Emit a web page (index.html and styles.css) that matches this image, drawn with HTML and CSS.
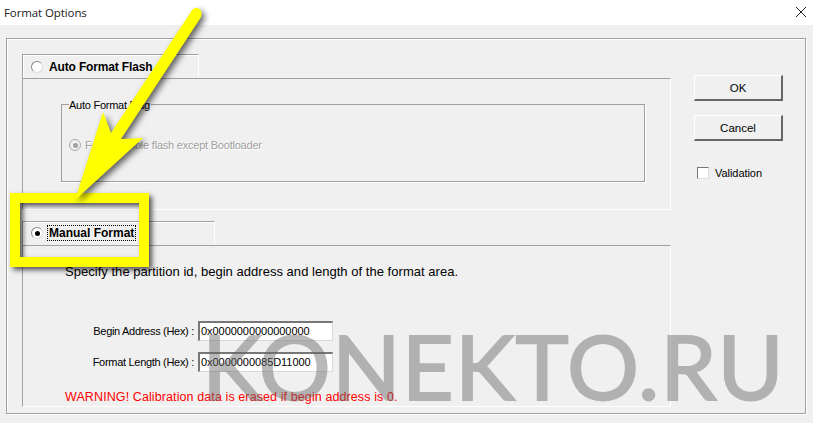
FILE: index.html
```html
<!DOCTYPE html>
<html lang="en">
<head>
<meta charset="utf-8">
<title>Format Options</title>
<link rel="stylesheet" href="styles.css">
</head>
<body>
<div class="window">
  <header class="titlebar">
    <span class="title">Format Options</span>
    <svg class="close" width="12" height="12" viewBox="0 0 12 12"><path d="M1 1l10 10M11 1L1 11" stroke="#222" stroke-width="1" fill="none"/></svg>
  </header>
  <div class="outer">
    <div class="main">
      <div class="tab tab-first">
        <span class="radio"></span>
        <span class="tab-label">Auto Format Flash</span>
      </div>
      <section class="panel panel-first">
        <div class="group">
          <span class="legend">Auto Format Flag</span>
          <div class="option">
            <span class="radio radio-off"></span>
            <span class="muted">Format whole flash except Bootloader</span>
          </div>
        </div>
      </section>
      <div class="tab tab-second">
        <span class="radio radio-on"></span>
        <span class="tab-label focus">Manual Format</span>
      </div>
      <section class="panel panel-second">
        <p class="hint">Specify the partition id, begin address and length of the format area.</p>
        <div class="row row-first">
          <label class="field-label">Begin Address (Hex) :</label>
          <div class="input">0x0000000000000000</div>
        </div>
        <div class="row">
          <label class="field-label">Format Length (Hex) :</label>
          <div class="input">0x0000000085D11000</div>
        </div>
        <p class="warning">WARNING! Calibration data is erased if begin address is 0.</p>
      </section>
    </div>
    <aside class="side">
      <button class="btn btn-ok">OK</button>
      <button class="btn">Cancel</button>
      <div class="check"><span class="box"></span><span>Validation</span></div>
    </aside>
  </div>
  <div class="watermark">KONEKTO.RU</div>
  <div class="highlight"></div>
  <svg class="arrow" width="813" height="423" viewBox="0 0 813 423">
    <path d="M192.500 9.500 Q197 6 200.500 10 Q202.500 14 200.500 18 L121 139 L143 138 L75 200 L103 112 L111 133 Z" fill="#ffff00"/>
  </svg>
</div>
</body>
</html>
```
FILE: styles.css
```css
* { box-sizing: border-box; }
html, body { margin: 0; padding: 0; }
body { font-family: "Liberation Sans", Arial, sans-serif; font-size: 11px; color: #000; }
.window { position: relative; width: 813px; height: 423px; background: #f0f0f0; overflow: hidden; }
.titlebar { height: 25px; background: #fff; display: flex; align-items: center; justify-content: space-between; padding: 0 1px 1px 4px; }
.title { font-family: "Open Sans", sans-serif; font-size: 11.500px; letter-spacing: -.1px; color: #222; }
.close { margin-right: 5px; }
.outer { display: flex; width: 800px; height: 376px; margin: 13px 0 0 6px; padding: 15px 0 0 15px; border: 1px solid #a0a0a0; box-shadow: 1px 1px 0 #fff, inset 1px 1px 0 #fff; }
.main { width: 649px; }
.tab { display: flex; align-items: center; height: 24px; padding: 1px 0 0 8px; border: 1px solid #a0a0a0; border-right-color: #fff; border-bottom: 0; box-shadow: inset 1px 1px 0 #fff; }
.tab-first { width: 177px; }
.tab-second { width: 193px; margin-top: 11px; padding: 0 0 1px 8px; }
.tab-label { margin-left: 5px; font-weight: 700; font-size: 12px; padding: 0 1px; }
.tab-first .tab-label { letter-spacing: -.15px; }
.focus { outline: 1px dotted #000; line-height: 14px; }
.radio { position: relative; width: 12px; height: 12px; border-radius: 50%; background: #fff; border: 1px solid #8a8a8a; border-right-color: #ddd; border-bottom-color: #ddd; flex: none; }
.radio-on::after, .radio-off::after { content: ""; position: absolute; left: 2.500px; top: 2.500px; width: 5px; height: 5px; border-radius: 50%; background: #000; }
.radio-off { background: #f0f0f0; border-color: #a8a8a8; }
.radio-off::after { background: #a0a0a0; }
.panel { width: 649px; border: 1px solid #a0a0a0; border-right-color: #fff; border-bottom-color: #fff; }
.panel-first { height: 132px; padding: 25px 0 0 38px; }
.panel-second { height: 162px; padding: 19px 0 0 42px; }
.group { width: 584px; height: 78px; border: 1px solid #a0a0a0; box-shadow: 1px 1px 0 #fff; padding-left: 7px; }
.legend { display: block; width: fit-content; margin-top: -7px; padding: 0 1px 0 0; background: #f0f0f0; line-height: 14px; letter-spacing: -.25px; }
.option { display: flex; align-items: center; gap: 4px; margin-top: 27px; }
.muted { color: #a0a0a0; text-shadow: 1px 1px 0 #fff; letter-spacing: -.22px; }
.hint { margin: 0; font-size: 13px; line-height: 14px; letter-spacing: .03px; }
.row { display: flex; align-items: center; height: 20px; margin-top: 11px; }
.row-first { margin-top: 42px; }
.field-label { width: 129px; text-align: right; font-size: 11px; letter-spacing: -.3px; }
.input { width: 135px; height: 20px; margin-left: 4px; padding-left: 1px; background: #fff; border: 1px solid #d8d8d8; border-top: 2px solid #777; border-left: 2px solid #777; line-height: 16px; font-size: 11px; letter-spacing: -.05px; }
.warning { margin: 18px 0 0; color: #ff0000; line-height: 14px; font-size: 12.500px; letter-spacing: .1px; }
.side { display: flex; flex-direction: column; margin-left: 23px; padding-top: 21px; }
.btn { width: 89px; height: 26px; padding: 0; background: #f0f0f0; border: 1px solid #fff; border-right: 2px solid #666; border-bottom: 2px solid #666; font: 11.500px "Liberation Sans", sans-serif; color: #000; }
.btn-ok { margin-bottom: 14px; }
.check { display: flex; align-items: center; gap: 6px; margin: 26px 0 0 3px; font-size: 11px; letter-spacing: -.05px; }
.box { width: 12px; height: 12px; background: #fff; border: 1px solid #777; border-right-color: #ddd; border-bottom-color: #ddd; }
.watermark { position: absolute; left: 202px; top: 311px; font-family: Lato, sans-serif; font-size: 90px; line-height: 108px; letter-spacing: 1.100px; color: #666; -webkit-text-stroke: 2px #666; opacity: .45; filter: blur(.5px); white-space: nowrap; }
.highlight { position: absolute; left: 10px; top: 193px; width: 139px; height: 74px; border: 10px solid #ffff00; box-shadow: 3px 3px 5px rgba(0,0,0,.65), inset 3px 3px 5px rgba(0,0,0,.65); }
.arrow { position: absolute; left: 0; top: 0; filter: drop-shadow(3px 3px 3px rgba(0,0,0,.6)); }
```
